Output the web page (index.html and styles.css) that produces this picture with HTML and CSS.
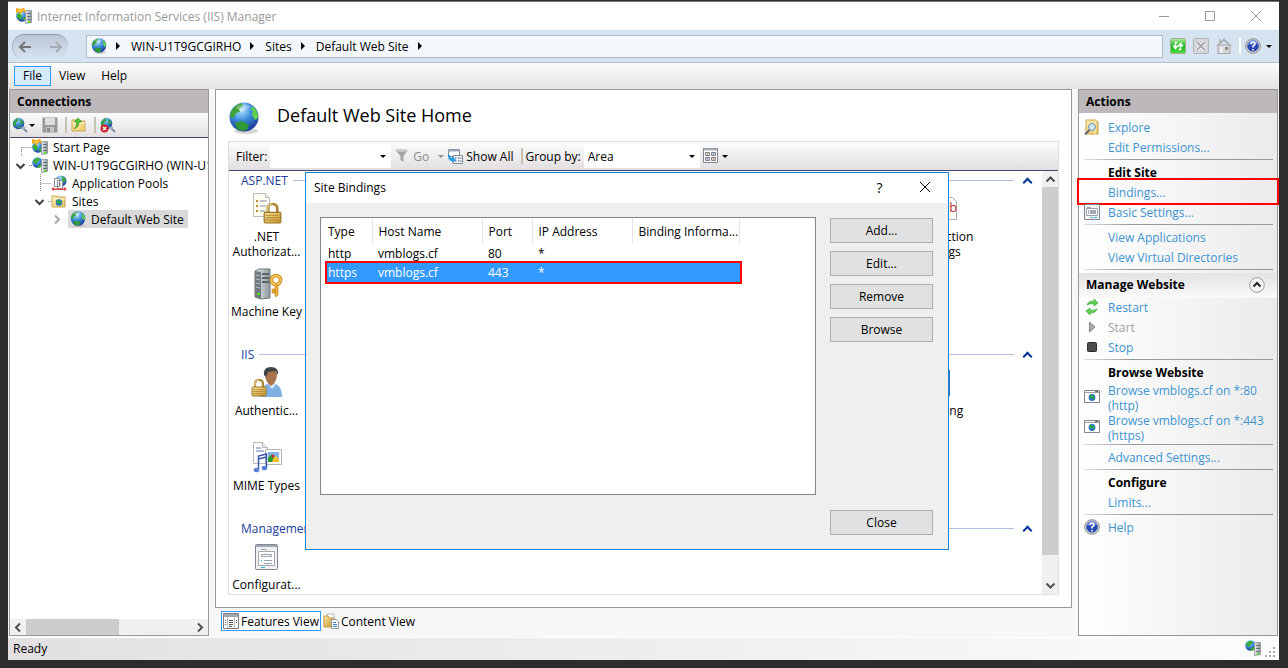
FILE: index.html
```html
<!DOCTYPE html>
<html lang="en">
<head>
    <meta charset="UTF-8">
    <meta name="viewport" content="width=device-width, initial-scale=1.0">
    <title>Internet Information Services (IIS) Manager</title>
    <link rel="stylesheet" href="styles.css">
</head>
<body>
    <!-- Shared icons -->
    <svg class="sprite" aria-hidden="true">
        <defs>
            <radialGradient id="sea" cx="40%" cy="25%" r="80%">
                <stop offset="0" stop-color="#b9e6fb"/>
                <stop offset=".45" stop-color="#3f8fdd"/>
                <stop offset="1" stop-color="#12308f"/>
            </radialGradient>
            <linearGradient id="steel" x1="0" x2="1">
                <stop offset="0" stop-color="#e9eef0"/>
                <stop offset="1" stop-color="#8d979d"/>
            </linearGradient>
            <linearGradient id="gold" x1="0" x2="1" y2="1">
                <stop offset="0" stop-color="#fbe9a0"/>
                <stop offset="1" stop-color="#c8942c"/>
            </linearGradient>
            <linearGradient id="folder-fill" x1="0" x2="1" y2="1">
                <stop offset="0" stop-color="#fdf3b8"/>
                <stop offset="1" stop-color="#ecc665"/>
            </linearGradient>
            <linearGradient id="go" y2="1" x2="0">
                <stop offset="0" stop-color="#b8efa8"/>
                <stop offset=".5" stop-color="#14b414"/>
                <stop offset="1" stop-color="#4ee03c"/>
            </linearGradient>
        </defs>
        <symbol id="globe" viewBox="0 0 32 32">
            <ellipse cx="18" cy="29" rx="12" ry="3" fill="#999" opacity=".4"/>
            <circle cx="16" cy="15" r="14.500" fill="url(#sea)"/>
            <path d="M3 10Q6 3 14 1l1 3-4 3 1 3-4 1-2 5-4-1z" fill="#3fa338"/>
            <path d="M24 4q6 4 6 12l-3 2-3-5 1-4-2-2z" fill="#5fd04a"/>
            <path d="M7 21l7-2 7 4-2 5-5 1-5-2z" fill="#2f9a35"/>
            <path d="M8 5q7-5 15 0-6 2-8 5-5-1-7-5z" fill="#fff" opacity=".3"/>
        </symbol>
        <symbol id="tower" viewBox="0 0 16 16">
            <path d="M9.500 3.500l1-1h5v12l-6 1z" fill="url(#steel)" stroke="#8a9296" stroke-width=".8"/>
            <path d="M11 5.500h4M11 8.500h4M11 11.500h4" stroke="#687074"/>
            <path d="M12 14h2" stroke="#52e010" stroke-width="2"/>
        </symbol>
        <symbol id="server" viewBox="0 0 16 16">
            <circle cx="5.500" cy="5.500" r="5.200" fill="url(#sea)"/>
            <path d="M1 4l3-3 3 0 1 2-3 2v2l-3-1zM5 9l4-2v3l-3 1z" fill="#3aae35"/>
            <use href="#tower"/>
        </symbol>
        <symbol id="manager" viewBox="0 0 16 16">
            <circle cx="6" cy="8" r="5.800" fill="url(#sea)"/>
            <path d="M1 6l3-1 2 3-2 4-3-3zM6 11l3-2v4z" fill="#3aae35"/>
            <path d="M0 0l4 1 4-1 2 3-1 2-2-2-3 4-1-3-3 1z" fill="#f5a91f"/>
            <path d="M2 2h5L4 4z" fill="#ffe14d"/>
            <use href="#tower"/>
        </symbol>
        <symbol id="sphere-plug" viewBox="0 0 16 16">
            <circle cx="6.500" cy="6.500" r="5.800" fill="url(#sea)"/>
            <path d="M1 5l4-4 2 2-3 3v3l-3-1zM9 2l3 4-3 2-1-3zM5 9l4 1-2 2z" fill="#3a9e4a"/>
            <path d="M9 10l3 2 3 3" stroke="#7b8fa8" stroke-width="2" fill="none"/>
            <path d="M10 12l3-2" stroke="#a8b8c8" stroke-width="2"/>
        </symbol>
        <symbol id="folder" viewBox="0 0 16 16">
            <path d="M1 3h5l1 1h7v10H1z" fill="url(#folder-fill)" stroke="#c9a551"/>
            <path d="M2 6h12" stroke="#fff6cf"/>
        </symbol>
        <symbol id="help" viewBox="0 0 16 16">
            <circle cx="8" cy="8" r="7.300" fill="#dcdcdc" stroke="#8a8a8a"/>
            <circle cx="8" cy="8" r="5.800" fill="#2749b5"/>
            <path d="M3 7a5 5 0 0 1 10-1q-5 0-10 1z" fill="#7f9be6" opacity=".6"/>
            <path d="M6 6q0-2 2-2t2 2q0 1-2 2v1.500M8 11v1.500" stroke="#fff" stroke-width="1.600" fill="none"/>
        </symbol>
        <symbol id="window-globe" viewBox="0 0 16 16">
            <path d="M.5 2.500h15v12H.5z" fill="#fff" stroke="#808793"/>
            <path d="M1 4.500h14" stroke="#9aa1ad"/>
            <path d="M11 3.500h3" stroke="#5a6275"/>
            <circle cx="8" cy="9.500" r="3.400" fill="#2c6bd0"/>
            <path d="M5 9l2-3 1 2-1 3zM9 7l2 2-2 3-1-2z" fill="#2fb040"/>
        </symbol>
        <symbol id="settings" viewBox="0 0 16 16">
            <path d="M.5.5h15v15H.5z" fill="#f4f4f4" stroke="#808793"/>
            <path d="M2.500 4.500h11v7h-11z" fill="#fff" stroke="#9aa1ad"/>
            <path d="M3 3.500h4" stroke="#9aa1ad"/>
            <path d="M4 7h1M4 9h1M6 7h6M6 9h6" stroke="#4a5568"/>
            <path d="M6 13.500h3M10 13.500h3" stroke="#35b6dc"/>
        </symbol>
        <symbol id="padlock" viewBox="0 0 16 18">
            <path d="M4 9V5q0-4 4-4t4 4v4" fill="none" stroke="#a88432" stroke-width="2.200"/>
            <path d="M4 9V5q0-4 4-4" fill="none" stroke="#ecd58a"/>
            <rect x="1" y="8" width="14" height="9" rx="1" fill="url(#gold)" stroke="#9a7424"/>
            <path d="M2 10.500h12M2 12.500h12M2 14.500h12" stroke="#a87e2c" stroke-width=".7"/>
        </symbol>
    </svg>

    <div class="window">
        <header class="titlebar">
            <svg class="icon"><use href="#manager"/></svg>
            <h1>Internet Information Services (IIS) Manager</h1>
            <div class="window-buttons">
                <button aria-label="Minimize"><svg width="12" height="12"><path d="M1 6.500h10"/></svg></button>
                <button aria-label="Maximize"><svg width="12" height="12"><path d="M1.500 1.500h9v9h-9z"/></svg></button>
                <button aria-label="Close window"><svg width="12" height="12"><path d="M1 1l10 10M11 1L1 11"/></svg></button>
            </div>
        </header>

        <nav class="navbar">
            <div class="history">
                <button aria-label="Back"><svg width="16" height="14"><path d="M14 7H3M8 2L3 7l5 5"/></svg></button>
                <button aria-label="Forward" disabled><svg width="16" height="14"><path d="M2 7h11M8 2l5 5-5 5"/></svg></button>
            </div>
            <div class="address">
                <svg class="icon"><use href="#globe"/></svg>
                <i class="arrow"></i>
                <a href="#server">WIN-U1T9GCGIRHO</a>
                <i class="arrow"></i>
                <a href="#sites">Sites</a>
                <i class="arrow"></i>
                <a href="#default">Default Web Site</a>
                <i class="arrow"></i>
            </div>
            <div class="nav-tools">
                <button aria-label="Refresh">
                    <svg class="icon" viewBox="0 0 16 16"><rect x=".5" y=".5" width="15" height="15" rx="1" fill="url(#go)" stroke="#9fae9b"/><path d="M7.500 4.500h-2V10M3 7.500l2.500 3 2.500-3M8.500 11.500h2V6M8 8.500l2.500-3 2.500 3" stroke="#fff" stroke-width="1.500" fill="none"/></svg>
                </button>
                <button aria-label="Stop loading" disabled>
                    <svg class="icon" viewBox="0 0 16 16"><rect x=".5" y=".5" width="15" height="15" rx="1" fill="#d3d5d8" stroke="#b3b7bc"/><path d="M4 4l8 8M12 4l-8 8" stroke="#fff" stroke-width="3.500"/><path d="M4 4l8 8M12 4l-8 8" stroke="#a4a8ad" stroke-width="2"/></svg>
                </button>
                <button aria-label="Home">
                    <svg class="icon" viewBox="0 0 16 16"><path d="M2 7h12v8.500H2z" fill="#d8d8d8" stroke="#a8a8a8"/><path d="M0 8l8-7.500L16 8h-2L8 3 2 8z" fill="#a9abad"/><path d="M3 1h2v4H3z" fill="#b5b5b5"/><path d="M4 9h3v6H4z" fill="#f0f0f0"/><path d="M9 9h3v3H9z" fill="#8f9194"/></svg>
                </button>
                <span class="divider light"></span>
                <button aria-label="Help menu"><svg class="icon"><use href="#help"/></svg><i class="caret"></i></button>
            </div>
        </nav>

        <div class="menubar">
            <button class="active">File</button>
            <button>View</button>
            <button>Help</button>
        </div>

        <main class="workspace">
            <section class="panel connections">
                <h2>Connections</h2>
                <div class="toolbar">
                    <button aria-label="Connect"><svg class="icon"><use href="#sphere-plug"/></svg><i class="caret"></i></button>
                    <button aria-label="Save" disabled>
                        <svg class="icon" viewBox="0 0 16 16"><path d="M.5.500h15v15h-15z" fill="#999"/><path d="M3 1h10v7H3z" fill="#dedede"/><path d="M4 10h8v5.500H4z" fill="#c4c4c4"/><path d="M5 11h3v4H5z" fill="#8a8a8a"/></svg>
                    </button>
                    <span class="divider"></span>
                    <button aria-label="Up">
                        <svg class="icon" viewBox="0 0 16 16"><use href="#folder"/><path d="M3 12q5-2 5-7h3L7 1 3 5h3q0 4-3 7z" fill="#53c437" stroke="#2f8a22" stroke-width=".6"/></svg>
                    </button>
                    <span class="divider"></span>
                    <button aria-label="Disconnect">
                        <svg class="icon" viewBox="0 0 16 16"><use href="#sphere-plug"/><circle cx="4.500" cy="11.500" r="4" fill="#c9282d"/><path d="M3 10l3 3M6 10l-3 3" stroke="#fff" stroke-width="1.300"/></svg>
                    </button>
                </div>
                <ul class="tree">
                    <li>
                        <svg class="branch"><path class="dots" d="M11.500 9v9M11.500 9.500H22"/></svg>
                        <svg class="icon"><use href="#manager"/></svg><span>Start Page</span>
                    </li>
                    <li>
                        <svg class="branch"><path class="chevron" d="M6.500 8l4 4 4-4"/><path class="dots" d="M19 9.500h3"/></svg>
                        <svg class="icon"><use href="#server"/></svg><span>WIN-U1T9GCGIRHO (WIN-U1T9GCGIRHO\Administrator)</span>
                    </li>
                    <li class="level-1">
                        <svg class="branch"><path class="dots" d="M11.500 0v18M11.500 9.500H22"/></svg>
                        <svg class="icon" viewBox="0 0 16 16"><circle cx="10" cy="6" r="5.500" fill="url(#sea)"/><path d="M11 1l4 3-2 4-2-3z" fill="#3aae35"/><path d="M3.500 3.500h5v8h-5zM6.500 5.500h5v8h-5z" fill="#fff" stroke="#8d8d9b"/><path d="M8 8h2M8 10h2" stroke="#777"/><path d="M0 14l3-2v1.500h10V12l3 2-3 2v-1H3v1z" fill="#d44"/></svg>
                        <span>Application Pools</span>
                    </li>
                    <li class="level-1">
                        <svg class="branch"><path class="chevron" d="M6.500 8l4 4 4-4"/><path class="dots" d="M19 9.500h3"/></svg>
                        <svg class="icon" viewBox="0 0 16 16"><use href="#folder"/><circle cx="8" cy="9.500" r="3.300" fill="#2c6bd0"/><path d="M5 9l2-3 1 2-1 3zM9 7l2 2-2 3-1-2z" fill="#2fb040"/></svg>
                        <span>Sites</span>
                    </li>
                    <li class="level-2">
                        <svg class="branch"><path class="chevron faint" d="M9 5.500l4 4-4 4"/></svg>
                        <span class="selected"><svg class="icon"><use href="#globe"/></svg>Default Web Site</span>
                    </li>
                </ul>
                <div class="scroll-x">
                    <button aria-label="Scroll left"><svg width="16" height="16"><path d="M10 4.500L6 8.500l4 4"/></svg></button>
                    <span class="thumb"></span>
                    <button aria-label="Scroll right"><svg width="16" height="16"><path d="M6 4.500l4 4-4 4"/></svg></button>
                </div>
            </section>

            <section class="center">
                <div class="home">
                    <div class="home-title">
                        <svg width="32" height="34"><use href="#globe"/></svg>
                        <h2>Default Web Site Home</h2>
                    </div>
                    <div class="features">
                        <div class="toolbar filter-bar">
                            <label for="filter">Filter:</label>
                            <span class="combo"><input id="filter" type="text"></span>
                            <button class="go" disabled>
                                <svg class="icon" viewBox="0 0 16 16"><path d="M1 2h13L9.500 8v6l-3-2V8z" fill="#a5a5a5"/><ellipse cx="7.500" cy="2.500" rx="6.500" ry="1.500" fill="#c9c9c9"/></svg>Go<i class="caret"></i>
                            </button>
                            <button>
                                <svg class="icon" viewBox="0 0 16 16"><path d="M1.500 1.500h11v7h-11z" fill="#fff" stroke="#7e889b"/><path d="M1 2.500h12" stroke="#9ba6bb" stroke-width="2"/><path d="M6.500 7.500h9v8h-9z" fill="#fff" stroke="#7e889b"/><path d="M8 10h1.500M11 10h1.500M8 13h1.500M11 13h1.500M13.500 10h1M13.500 13h1" stroke="#556fa5" stroke-width="1.500"/><path d="M1 7q0 6 4 6v2l4-3-4-4v2q-2 0-2-3z" fill="#2e9be0"/></svg>Show All
                            </button>
                            <span class="divider"></span>
                            <label for="group">Group by:</label>
                            <span class="combo"><select id="group"><option>Area</option></select></span>
                            <button aria-label="View mode">
                                <svg class="icon" viewBox="0 0 16 16"><path d="M.5.5h14v14H.5z" fill="#fff" stroke="#808793"/><path d="M1 1.500h13" stroke="#aab0bb" stroke-width="2"/><path d="M2.500 4.500h4v3h-4zM8.500 4.500h4v3h-4zM2.500 9.500h4v3h-4zM8.500 9.500h4v3h-4z" fill="#d8d8d8" stroke="#7d8390"/><path d="M4 6h1" stroke="#c0a000"/><path d="M10 6h1" stroke="#1e90e0"/><path d="M4 11h1" stroke="#6a4ad0"/><path d="M10 11h1" stroke="#e05a20"/></svg><i class="caret"></i>
                            </button>
                        </div>
                        <div class="feature-view">
                            <div class="groups">
                                <section class="group">
                                    <h3>ASP.NET</h3>
                                    <div class="items">
                                        <a href="#authorization">
                                            <svg viewBox="0 0 32 32"><path d="M2.500.5h12l4 4v19h-16z" fill="#fffef2" stroke="#bdbdbd"/><path d="M14.500.5v4h4" fill="#eee" stroke="#bdbdbd"/><path d="M5 8h2M5 13h2M5 18h2" stroke="#c38a2a" stroke-width="2"/><path d="M9 8h7M9 13h6M9 18h5" stroke="#8a8aa0"/><use href="#padlock" x="12" y="9" width="19" height="23"/></svg>
                                            <span>.NET Authorizat...</span>
                                        </a>
                                        <a href="#connection-strings" class="far">
                                            <svg viewBox="0 0 32 32"><path d="M6.500 4.500h20l4 4v18h-24z" fill="#fff" stroke="#aaa"/><text x="16" y="19" class="glyph">ab</text></svg>
                                            <span>Connection Strings</span>
                                        </a>
                                        <a href="#machine-key">
                                            <svg viewBox="0 0 32 32"><path d="M4 3l4-2h11v29l-9 1-6-2z" fill="url(#steel)" stroke="#6e777b"/><path d="M4 3l6 1v27l-6-2z" fill="#707a7e"/><path d="M11 6h7M11 10h7M11 14h7" stroke="#5a6468" stroke-width="2"/><path d="M5 7l4 1M5 11l4 1M5 15l4 1M5 19l4 1" stroke="#b8c1c5"/><path d="M6 26h3" stroke="#4ee020" stroke-width="2"/><circle cx="25" cy="12" r="4.500" fill="none" stroke="#c98918" stroke-width="3.600"/><circle cx="25" cy="12" r="4.500" fill="none" stroke="#ffd56a" stroke-width="1.500"/><path d="M24 17h3v10l-2 2-1-2zM21 21h3v4h-3z" fill="#efae38" stroke="#b87a16" stroke-width=".6"/></svg>
                                            <span>Machine Key</span>
                                        </a>
                                    </div>
                                </section>
                                <section class="group">
                                    <h3>IIS</h3>
                                    <div class="items">
                                        <a href="#authentication">
                                            <svg viewBox="0 0 32 32"><path d="M10 30q0-14 11-14 10 1 10 14z" fill="#7fb0e4"/><path d="M17 17l4 5 4-5z" fill="#dcecfb"/><path d="M14 7q0-6 6-6t6 6q0 8-6 12-6-4-6-12z" fill="#a8734a"/><path d="M13 8q-1-8 7-8t7 8l-2-4-8 1-2 5z" fill="#3c4346"/><use href="#padlock" x="0" y="11" width="16" height="20"/></svg>
                                            <span>Authentic...</span>
                                        </a>
                                        <a href="#logging" class="far">
                                            <svg viewBox="0 0 32 32"><path d="M6 3h18v26H6z" fill="#2f77bd"/></svg>
                                            <span>Logging</span>
                                        </a>
                                        <a href="#mime">
                                            <svg viewBox="0 0 32 32"><path d="M2.500.5h9l5 5v16h-14z" fill="#fff" stroke="#b8b8b8"/><path d="M11.500.5v5h5" fill="#ececec" stroke="#b8b8b8"/><path d="M5 6h5M5 9h8" stroke="#5b7bb5"/><path d="M14.500 7.500h16v15h-16z" fill="#fff" stroke="#b5b5b5"/><path d="M17 10h11v10H17z" fill="#7fb4f0"/><path d="M17 20v-4l4-4 4 8z" fill="#2b9b35"/><path d="M21 20l2-5 2-1 3 3v3z" fill="#efc330"/><circle cx="22" cy="14" r="1.500" fill="#d42424"/><path d="M7.500 27V14l8-2v13M7.500 17l8-2" fill="none" stroke="#3a57b0" stroke-width="1.500"/><ellipse cx="5.500" cy="28" rx="2.800" ry="2.300" fill="#5b80d8"/><ellipse cx="13.500" cy="26" rx="2.800" ry="2.300" fill="#5b80d8"/></svg>
                                            <span>MIME Types</span>
                                        </a>
                                    </div>
                                </section>
                                <section class="group">
                                    <h3>Management</h3>
                                    <div class="items">
                                        <a href="#configuration">
                                            <svg viewBox="0 0 32 32"><rect x="4.500" y="3.500" width="22" height="25" rx="1" fill="#f1f1f1" stroke="#7f8793"/><path d="M5 5h21" stroke="#a0a8b5" stroke-width="2"/><path d="M7.500 10.500h16v14h-16zM10 8.500h5v2" fill="#fff" stroke="#a3a9b2"/><path d="M10.500 13.500h10v2h-10zM13 19.500h8M13 22.500h8" fill="none" stroke="#9aa0aa"/><path d="M10 19.500h1M10 26.500h4" stroke="#27bde0"/></svg>
                                            <span>Configurat...</span>
                                        </a>
                                    </div>
                                </section>
                            </div>
                            <div class="scroll-y">
                                <button aria-label="Scroll up"><svg width="16" height="16"><path d="M4.500 10.500l4-4 4 4"/></svg></button>
                                <span class="thumb"></span>
                                <button aria-label="Scroll down"><svg width="16" height="16"><path d="M4.500 5.500l4 4 4-4"/></svg></button>
                            </div>
                        </div>
                    </div>
                </div>
                <div class="view-tabs">
                    <button class="active">
                        <svg class="icon" viewBox="0 0 16 16"><path d="M.5.5h15v15H.5z" fill="#fff" stroke="#7d7d7d"/><path d="M1 2.500h14" stroke="#a3a8b0" stroke-width="3"/><path d="M4.500 4v11M11.500 4v11" stroke="#bbb"/><path d="M2 7.500h1M2 9.500h1M2 11.500h1M6 7.500h4M6 9.500h4M6 11.500h4M6 13.500h3M13 7.500h1M13 9.500h1" stroke="#555"/></svg>Features View
                    </button>
                    <button>
                        <svg class="icon" viewBox="0 0 16 16"><path d="M4 1h7v8H4z" fill="#fff" stroke="#b5b5b5"/><path d="M1 3h4l1 2h5v9H1z" fill="url(#gold)" stroke="#c49a40"/><path d="M8.500 6.500h5l2 2v7h-7z" fill="#fff" stroke="#999"/><path d="M10 9.500h3M10 11.500h4M10 13.500h4" stroke="#3c78c8"/></svg>Content View
                    </button>
                </div>

                <div class="dialog" role="dialog" aria-labelledby="dialog-title">
                    <div class="dialog-title">
                        <h2 id="dialog-title">Site Bindings</h2>
                        <button aria-label="Dialog help">?</button>
                        <button aria-label="Close dialog"><svg width="12" height="12"><path d="M1 1l10 10M11 1L1 11"/></svg></button>
                    </div>
                    <div class="dialog-body">
                        <div class="bindings">
                            <table>
                                <thead>
                                    <tr><th class="type">Type</th><th class="host">Host Name</th><th class="port">Port</th><th class="ip">IP Address</th><th class="info">Binding Informa...</th></tr>
                                </thead>
                                <tbody>
                                    <tr><td>http</td><td>vmblogs.cf</td><td>80</td><td>*</td><td></td></tr>
                                    <tr class="selected"><td>https</td><td>vmblogs.cf</td><td>443</td><td>*</td><td></td></tr>
                                </tbody>
                            </table>
                        </div>
                        <div class="dialog-buttons">
                            <button>Add...</button>
                            <button>Edit...</button>
                            <button>Remove</button>
                            <button>Browse</button>
                        </div>
                    </div>
                    <div class="dialog-footer"><button>Close</button></div>
                </div>
            </section>

            <aside class="panel actions">
                <h2>Actions</h2>
                <ul>
                    <li><svg class="icon" viewBox="0 0 16 16"><path d="M2 1h9l3 2v12H2z" fill="url(#folder-fill)" stroke="#cba548"/><path d="M11 1v14" stroke="#fff3b8"/><circle cx="8" cy="8" r="3.500" fill="#cfe7f7" stroke="#7890a5"/><path d="M5.500 11L1 15.500" stroke="#667" stroke-width="2"/></svg><a href="#explore">Explore</a></li>
                    <li><a href="#permissions">Edit Permissions...</a></li>
                    <li class="rule"></li>
                    <li><strong>Edit Site</strong></li>
                    <li class="marked"><a href="#bindings">Bindings...</a></li>
                    <li><svg class="icon"><use href="#settings"/></svg><a href="#basic">Basic Settings...</a></li>
                    <li class="rule"></li>
                    <li><a href="#applications">View Applications</a></li>
                    <li><a href="#directories">View Virtual Directories</a></li>
                    <li class="rule"></li>
                    <li class="section"><strong>Manage Website</strong><button aria-label="Collapse"><svg width="16" height="16"><circle cx="8" cy="8" r="7.300"/><path d="M4.500 9.500L8 6l3.500 3.500"/></svg></button></li>
                    <li><svg class="icon" viewBox="0 0 16 16"><path d="M3 6q1-4 7-4V0l4 4-4 3V5Q6 4 3 6z" fill="#63cf55" stroke="#2ea52a" stroke-width=".6"/><path d="M13 10q-1 4-7 4v2l-4-4 4-3v2q4 1 7-1z" fill="#63cf55" stroke="#2ea52a" stroke-width=".6"/></svg><a href="#restart">Restart</a></li>
                    <li><svg class="icon" viewBox="0 0 16 16"><path d="M5.500 3l5.500 5-5.500 5z" fill="#aaa" stroke="#858585"/></svg><span class="disabled">Start</span></li>
                    <li><svg class="icon" viewBox="0 0 16 16"><rect x="3.500" y="3.500" width="9" height="9" rx="1" fill="#4d4d4d" stroke="#2d2d2d"/></svg><a href="#stop">Stop</a></li>
                    <li class="rule"></li>
                    <li><strong>Browse Website</strong></li>
                    <li class="two-line"><svg class="icon"><use href="#window-globe"/></svg><a href="#http">Browse vmblogs.cf on *:80 (http)</a></li>
                    <li class="two-line"><svg class="icon"><use href="#window-globe"/></svg><a href="#https">Browse vmblogs.cf on *:443 (https)</a></li>
                    <li class="rule"></li>
                    <li><a href="#advanced">Advanced Settings...</a></li>
                    <li class="rule"></li>
                    <li><strong>Configure</strong></li>
                    <li><a href="#limits">Limits...</a></li>
                    <li class="rule"></li>
                    <li><svg class="icon"><use href="#help"/></svg><a href="#help-topics">Help</a></li>
                </ul>
            </aside>
        </main>

        <footer class="statusbar">
            <span>Ready</span>
            <svg class="icon"><use href="#server"/></svg>
            <svg class="grip" width="12" height="12"><path d="M8 1h2v2H8zM4 5h2v2H4zM8 5h2v2H8zM0 9h2v2H0zM4 9h2v2H4zM8 9h2v2H8z"/></svg>
        </footer>
    </div>
</body>
</html>
```
FILE: styles.css
```css
* {
    margin: 0;
    padding: 0;
    box-sizing: border-box;
}
body {
    background-color: #2d2d2d;
    color: #000;
    font-family: "Open Sans", "Noto Sans", sans-serif;
    font-size: 12px;
    line-height: 15px;
    display: flex;
    min-height: 100vh;
    padding: 1px 9px 9px 8px;
}
button, select, input {
    font: inherit;
    color: inherit;
    background: none;
    border: none;
}
a {
    color: inherit;
    text-decoration: none;
}
ul {
    list-style: none;
}
svg {
    flex: none;
    display: block;
}
.sprite {
    position: absolute;
    width: 0;
    height: 0;
}
.icon {
    width: 16px;
    height: 16px;
}
.caret {
    border: 3px solid transparent;
    border-top-color: currentColor;
    border-bottom: none;
}
.divider {
    width: 2px;
    height: 16px;
    background-color: #c5c3ae;
}
.divider.light {
    background-color: #fff;
}
.window {
    flex: 1;
    min-width: 0;
    display: flex;
    flex-direction: column;
    background-color: #f7f7f7;
    border-top: 1px solid #777;
}

/* Title and navigation */
.titlebar {
    display: flex;
    align-items: center;
    gap: 5px;
    height: 28px;
    padding-left: 8px;
    background-color: #fff;
    color: #999;
}
.titlebar h1 {
    flex: 1;
    font-size: 12px;
    font-weight: normal;
}
.window-buttons {
    display: flex;
}
.window-buttons button {
    width: 46px;
    display: flex;
    justify-content: center;
}
.window-buttons path, .dialog-title path {
    fill: none;
    stroke: #999;
}
.navbar {
    display: flex;
    align-items: center;
    height: 33px;
    padding: 0 7px 0 4px;
    background-color: #d6e3f1;
    border-bottom: 1px solid #b3bdcd;
}
.history {
    display: flex;
    justify-content: space-between;
    align-items: center;
    width: 56px;
    height: 25px;
    padding: 0 4px;
    margin-right: 18px;
    border-radius: 12px;
    background: linear-gradient(#bcc7d6, #d6e3f1);
    border-top: 1px solid #8e99a8;
    border-left: 1px solid #a9b4c2;
}
.history path {
    fill: none;
    stroke: #777;
    stroke-width: 2;
}
.history button:disabled path {
    stroke: #a5abb3;
}
.address {
    flex: 1;
    display: flex;
    align-items: center;
    height: 23px;
    padding-left: 4px;
    background-color: #f4f8fc;
    border: 1px solid #b0bccb;
}
.arrow {
    margin: 0 11px 0 9px;
    border: 4px solid transparent;
    border-left-color: #000;
    border-right: none;
}
.nav-tools {
    display: flex;
    align-items: center;
    gap: 7px;
    padding-left: 7px;
}
.nav-tools .divider {
    margin-right: -3px;
}
.nav-tools button {
    display: flex;
    align-items: center;
    gap: 5px;
}
.menubar {
    display: flex;
    align-items: center;
    height: 26px;
    padding: 0 6px 1px;
    background: linear-gradient(#fcfcfc, #e4e2e3);
}
.menubar button {
    height: 20px;
    padding: 0 7px;
    border: 1px solid transparent;
}
.menubar .active {
    padding: 0 8px;
    background-color: #d5ebff;
    border-color: #3399ff;
}

/* Panels */
.workspace {
    flex: 1;
    display: grid;
    grid-template-columns: 200px minmax(0, 1fr) 200px;
    gap: 6px;
    padding: 0 1px 1px;
}
.panel {
    display: flex;
    flex-direction: column;
    min-width: 0;
    border: 1px solid #999;
    background-color: #fff;
}
.panel h2 {
    height: 23px;
    padding-left: 7px;
    font-size: 12px;
    line-height: 23px;
    background-color: #bcb8bb;
}
.toolbar {
    display: flex;
    align-items: center;
    background: linear-gradient(#fcfcfc, #e2dfe1);
    border-bottom: 1px solid #4a466e;
}
.toolbar button {
    display: flex;
    align-items: center;
    gap: 3px;
}
.connections .toolbar {
    height: 25px;
    padding-left: 2px;
    gap: 7px;
}
.connections .toolbar button {
    gap: 1px;
}
.connections .divider {
    margin-right: -3px;
}
.tree {
    flex: 1;
    overflow: hidden;
}
.tree li {
    display: flex;
    align-items: center;
    height: 18px;
    white-space: nowrap;
}
.tree .icon {
    margin-right: 5px;
}
.tree .level-1 {
    padding-left: 19px;
}
.tree .level-2 {
    padding-left: 36px;
}
.tree .selected {
    display: flex;
    align-items: center;
    height: 18px;
    padding: 0 4px 0 2px;
    background-color: #d9d9d9;
}
.branch {
    width: 22px;
    height: 18px;
}
.branch path {
    fill: none;
}
.dots {
    stroke: #888;
    stroke-dasharray: 1 1;
}
.chevron {
    stroke: #404040;
    stroke-width: 2;
}
.chevron.faint {
    stroke: #a6a6a6;
}
.scroll-x, .scroll-y {
    display: flex;
    background-color: #f0f0f0;
}
.scroll-y {
    flex-direction: column;
    width: 16px;
}
.scroll-x path, .scroll-y path {
    fill: none;
    stroke: #505050;
    stroke-width: 2;
}
.thumb {
    background-color: #cdcdcd;
}
.scroll-x .thumb {
    width: 47%;
    margin-right: auto;
}
.scroll-y .thumb {
    height: 87%;
    margin-bottom: auto;
}

/* Site home */
.center {
    position: relative;
    display: flex;
    flex-direction: column;
}
.home {
    flex: 1;
    display: flex;
    flex-direction: column;
    padding: 0 12px 12px;
    background-color: #fff;
    border: 1px solid #999;
}
.home-title {
    display: flex;
    align-items: center;
    gap: 17px;
    height: 51px;
    padding-top: 4px;
}
.home-title h2 {
    font-size: 18px;
    line-height: 24px;
    font-weight: normal;
    padding-bottom: 5px;
}
.features {
    flex: 1;
    display: flex;
    flex-direction: column;
    border: 1px solid #dfdfdf;
}
.filter-bar {
    height: 29px;
    padding-left: 7px;
    gap: 3px;
}
.go .caret {
    margin-left: 6px;
}
.filter-bar button:disabled {
    color: #8d8d8d;
}
.filter-bar .divider {
    margin-left: 4px;
}
.combo {
    position: relative;
}
.combo::after {
    content: "";
    position: absolute;
    right: 5px;
    top: 11px;
    border: 3px solid transparent;
    border-top-color: #000;
    border-bottom: none;
}
.combo select, .combo input {
    display: block;
    appearance: none;
    width: 121px;
    height: 24px;
    padding-left: 4px;
    background-color: #fff;
}
.combo select {
    width: 116px;
}
.feature-view {
    flex: 1;
    display: flex;
}
.groups {
    flex: 1;
    min-width: 0;
}
.group {
    padding-bottom: 2px;
}
.group:last-child {
    padding-bottom: 0;
}
.group h3 {
    display: flex;
    align-items: center;
    gap: 5px;
    height: 22px;
    padding: 0 11px 3px 12px;
    font-size: 12px;
    font-weight: normal;
    color: #1c3a9e;
}
.group h3::before {
    order: 1;
    content: "";
    flex: 1;
    height: 1px;
    margin-right: 5px;
    background-color: #b0c0e0;
}
.group h3::after {
    order: 2;
    content: "";
    width: 5px;
    height: 5px;
    margin-top: 3px;
    border: solid #003399;
    border-width: 2px 0 0 2px;
    transform: rotate(45deg);
}
.items {
    display: grid;
    grid-template-columns: repeat(10, 75px);
    grid-auto-rows: 75px;
}
.group:last-child .items {
    grid-auto-rows: 53px;
}
.items a {
    display: flex;
    flex-direction: column;
    align-items: center;
    gap: 4px;
    text-align: center;
}
.items a svg {
    width: 32px;
    height: 32px;
}
.items .far {
    grid-column: 10;
}
.glyph {
    font-size: 13px;
    fill: #b83232;
}
.view-tabs {
    display: flex;
    height: 28px;
    padding: 3px 6px 5px;
}
.view-tabs button {
    display: flex;
    align-items: center;
    gap: 2px;
    height: 20px;
    padding: 0 1px;
    border: 1px solid transparent;
}
.view-tabs .active {
    background-color: #fff;
    border-color: #3399ff;
}

/* Site Bindings dialog */
.dialog {
    position: absolute;
    left: 90px;
    top: 83px;
    width: 644px;
    border: 1px solid #1883d7;
    background-color: #efefef;
}
.dialog-title {
    display: flex;
    align-items: center;
    height: 30px;
    padding: 0 1px 2px 8px;
    background-color: #fff;
}
.dialog-title h2 {
    flex: 1;
    font-size: 12px;
    font-weight: normal;
}
.dialog-title button {
    width: 45px;
    display: flex;
    justify-content: center;
    font-size: 14px;
}
.dialog-title path {
    stroke: #000;
}
.dialog-body {
    display: flex;
    gap: 14px;
    padding: 14px 15px 0 14px;
}
.bindings {
    flex: 1;
    height: 278px;
    padding-left: 6px;
    background-color: #fff;
    border: 1px solid #828790;
}
.bindings table {
    border-collapse: collapse;
    table-layout: fixed;
    width: 413px;
}
.bindings th {
    height: 26px;
    text-align: left;
    font-weight: normal;
    white-space: nowrap;
    border-right: 1px solid #e5e5e5;
}
.bindings th, .bindings td {
    padding-left: 6px;
}
.bindings th:first-child, .bindings td:first-child {
    padding-left: 1px;
}
.bindings td {
    height: 19px;
}
.type {
    width: 45px;
}
.host {
    width: 110px;
}
.port {
    width: 50px;
}
.ip {
    width: 100px;
}
.bindings .selected {
    color: #fff;
    background-color: #3399ff;
    outline: 2px solid #f00;
}
.dialog-buttons {
    display: flex;
    flex-direction: column;
    gap: 8px;
    padding-top: 1px;
}
.dialog-body button, .dialog-footer button {
    width: 103px;
    height: 25px;
    background-color: #e1e1e1;
    border: 1px solid #adadad;
}
.dialog-footer {
    display: flex;
    justify-content: flex-end;
    padding: 15px 15px 14px;
}

/* Actions */
.actions {
    background: linear-gradient(to right, #fff, #ebebeb);
}
.actions h2 {
    padding-left: 7px;
}
.actions ul {
    padding-top: 5px;
}
.actions li {
    position: relative;
    height: 20px;
    padding: 2px 5px 0 29px;
}
.actions li .icon {
    position: absolute;
    left: 5px;
    top: 1px;
}
.actions a {
    color: #3d94d1;
}
.actions .disabled {
    color: #a0a0a0;
}
.actions .rule {
    height: 1px;
    padding: 0;
    margin: 1px 4px 3px 5px;
    background: linear-gradient(to right, #ddd, #999 25%, #999);
}
.actions .two-line {
    height: 30px;
    padding-top: 0;
}
.actions .two-line .icon {
    top: 5px;
}
.actions .section {
    display: flex;
    align-items: center;
    justify-content: space-between;
    height: 25px;
    padding: 0 12px 2px 7px;
    background: linear-gradient(#e4e2e3, #fafafa);
}
.section circle {
    fill: #f4f4f4;
    stroke: #999;
}
.section path {
    fill: none;
    stroke: #222;
    stroke-width: 2;
}
.marked::after {
    content: "";
    position: absolute;
    inset: -5px -2px -2px;
    border: 2px solid #f00;
    pointer-events: none;
}

/* Status bar */
.statusbar {
    display: flex;
    align-items: center;
    gap: 4px;
    height: 23px;
    padding: 0 2px 2px 5px;
    background: linear-gradient(to right, #e2e0e1, #fcfcfc);
    border-top: 1px solid #fff;
}
.statusbar span {
    flex: 1;
}
.grip {
    align-self: flex-end;
    fill: #aaa;
}
```
